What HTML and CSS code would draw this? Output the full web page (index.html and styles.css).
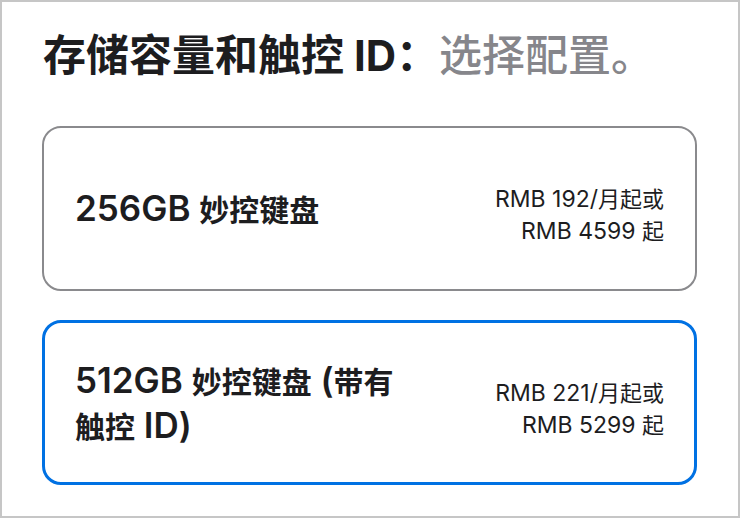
FILE: index.html
```html
<!DOCTYPE html>
<html lang="zh-CN">
<head>
<meta charset="utf-8">
<title>存储容量和触控 ID</title>
<link rel="stylesheet" href="styles.css">
</head>
<body>
<main class="page">
  <h2 class="headline">存储容量和触控<span class="lat-head"> ID</span>：<span class="muted">选择配置。</span></h2>
  <div class="options">
    <div class="option">
      <div class="option-name"><span class="lat-name">256GB </span>妙控键盘</div>
      <div class="option-price">
        <div><span class="lat-price">RMB 192/</span>月起或</div>
        <div><span class="lat-price">RMB 4599 </span>起</div>
      </div>
    </div>
    <div class="option selected">
      <div class="option-name"><span class="lat-name">512GB </span>妙控键盘<span class="lat-name"> (</span>带有<wbr><span class="cjk">触控</span><span class="lat-name"> ID)</span></div>
      <div class="option-price">
        <div><span class="lat-price">RMB 221/</span>月起或</div>
        <div><span class="lat-price">RMB 5299 </span>起</div>
      </div>
    </div>
  </div>
</main>
</body>
</html>
```
FILE: styles.css
```css
html, body {
  margin: 0;
  padding: 0;
  background: #ffffff;
}

body {
  font-family: "Noto Sans CJK SC", sans-serif;
  color: #1d1d1f;
}

.page {
  box-sizing: border-box;
  width: 740px;
  height: 518px;
  border: 2px solid #c6c6c6;
  padding: 24px 41px 0 40px;
  overflow: hidden;
}

.headline {
  margin: 0 0 48px 1px;
  font-size: 43px;
  line-height: 52px;
  font-weight: 700;
  color: #1d1d1f;
  white-space: nowrap;
}

.lat-head {
  font-family: "Inter", sans-serif;
  font-size: 42px;
  line-height: 1;
  font-weight: 700;
}

.muted {
  color: #86868b;
  font-weight: 500;
}

.options {
  display: flex;
  flex-direction: column;
  gap: 29px;
}

.option {
  box-sizing: border-box;
  height: 165px;
  border: 2px solid #8a8a8d;
  border-radius: 19px;
  padding: 0 31px;
  display: flex;
  align-items: center;
  justify-content: space-between;
}

.option.selected {
  border: 3px solid #0071e3;
  padding: 0 30px;
}

.option-name {
  font-size: 30px;
  line-height: 45px;
  font-weight: 700;
  max-width: 340px;
}

.cjk {
  font-family: "Noto Sans CJK SC", sans-serif;
}

.lat-name {
  font-family: "Inter", sans-serif;
  font-size: 35px;
  line-height: 1;
  font-weight: 600;
}

.option-price {
  margin-top: 9px;
  text-align: right;
  font-size: 22px;
  line-height: 32px;
  font-weight: 400;
}

.lat-price {
  font-family: "Inter", sans-serif;
  font-size: 23px;
  line-height: 1;
}
```
